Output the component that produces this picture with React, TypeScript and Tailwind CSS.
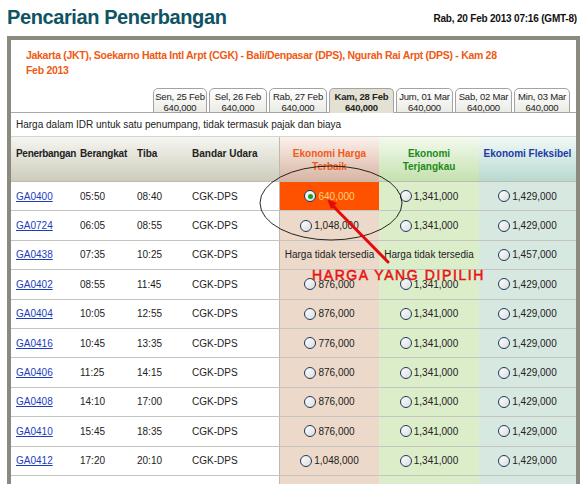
import React from 'react'

const tabs = [
  { day: 'Sen, 25 Feb', price: '640,000', w: 'w-[54px]' },
  { day: 'Sel, 26 Feb', price: '640,000', w: 'w-[58px]' },
  { day: 'Rab, 27 Feb', price: '640,000', w: 'w-[58px]' },
  { day: 'Kam, 28 Feb', price: '640,000', w: 'w-[65px]', active: true },
  { day: 'Jum, 01 Mar', price: '640,000', w: 'w-[57px]' },
  { day: 'Sab, 02 Mar', price: '640,000', w: 'w-[57px]' },
  { day: 'Min, 03 Mar', price: '640,000', w: 'w-[56px]' },
]

type Flight = {
  code: string
  dep: string
  arr: string
  best: string | null
  mid: string | null
  flex: string
  selected?: boolean
}

const flights: Flight[] = [
  { code: 'GA0400', dep: '05:50', arr: '08:40', best: '640,000', mid: '1,341,000', flex: '1,429,000', selected: true },
  { code: 'GA0724', dep: '06:05', arr: '08:55', best: '1,048,000', mid: '1,341,000', flex: '1,429,000' },
  { code: 'GA0438', dep: '07:35', arr: '10:25', best: null, mid: null, flex: '1,457,000' },
  { code: 'GA0402', dep: '08:55', arr: '11:45', best: '876,000', mid: '1,341,000', flex: '1,429,000' },
  { code: 'GA0404', dep: '10:05', arr: '12:55', best: '876,000', mid: '1,341,000', flex: '1,429,000' },
  { code: 'GA0416', dep: '10:45', arr: '13:35', best: '776,000', mid: '1,341,000', flex: '1,429,000' },
  { code: 'GA0406', dep: '11:25', arr: '14:15', best: '876,000', mid: '1,341,000', flex: '1,429,000' },
  { code: 'GA0408', dep: '14:10', arr: '17:00', best: '876,000', mid: '1,341,000', flex: '1,429,000' },
  { code: 'GA0410', dep: '15:45', arr: '18:35', best: '876,000', mid: '1,341,000', flex: '1,429,000' },
  { code: 'GA0412', dep: '17:20', arr: '20:10', best: '1,048,000', mid: '1,341,000', flex: '1,429,000' },
]

const cols = 'grid grid-cols-[65px_57px_55px_91px_100px_100px_97px]'

function Radio({ checked }: { checked?: boolean }) {
  return (
    <span className="inline-flex h-[12px] w-[12px] shrink-0 items-center justify-center rounded-full border border-[#1d3b5e] bg-gradient-to-br from-[#ffffff] to-[#dcdcdc]">
      {checked && <span className="h-[5px] w-[5px] rounded-full bg-[#1e9e2a]" />}
    </span>
  )
}

function Fare({ value, bg, selected }: { value: string | null; bg: string; selected?: boolean }) {
  if (value === null) {
    return (
      <div className={`flex items-center justify-center whitespace-nowrap text-[10px] text-[#222] ${bg}`}>
        Harga tidak tersedia
      </div>
    )
  }
  return (
    <div
      className={`flex items-center justify-center gap-[2px] text-[10px] ${
        selected ? 'bg-[#ff5200] text-[#ffd27c]' : `${bg} text-[#222]`
      }`}
    >
      <Radio checked={selected} />
      <span>{value}</span>
    </div>
  )
}

export default function App() {
  return (
    <div className="relative h-[484px] w-[583px] overflow-hidden bg-white text-[#222] [font-family:'Liberation_Sans',Arial,sans-serif]">
      <div className="flex h-[36px] items-start justify-between pl-[7px] pr-[6px] pt-[5px]">
        <h1 className="text-[20px] font-bold leading-[24px] tracking-[-0.4px] text-[#0e5462]">Pencarian Penerbangan</h1>
        <span className="pt-[6px] text-[10px] font-bold tracking-[-0.2px] text-[#111]">
          Rab, 20 Feb 2013 07:16 (GMT-8)
        </span>
      </div>

      <div className="ml-[7px] w-[573px] border-x-4 border-t-4 border-[#8c8a7e] bg-white">
        <p className="pl-[15px] pr-[76px] pt-[8px] text-[10.5px] font-bold leading-[15px] tracking-[-0.3px] text-[#ef5a12]">
          Jakarta (JKT), Soekarno Hatta Intl Arpt (CGK) - Bali/Denpasar (DPS), Ngurah Rai Arpt (DPS) - Kam 28 Feb 2013
        </p>

        <div className="mt-[10px] flex h-[25px] items-end gap-[2px] border-b border-[#a9a9a9] pl-[142px]">
          {tabs.map((t) => (
            <div
              key={t.day}
              className={`${t.w} -mb-px flex h-[25px] flex-col items-center rounded-t-[5px] border border-[#a3a3a3] pt-[2px] text-[9.5px] leading-[11px] tracking-[-0.2px] whitespace-nowrap ${
                t.active
                  ? 'border-b-[#e3e1d4] bg-[#e3e1d4] font-bold'
                  : 'bg-gradient-to-b from-[#ffffff] to-[#ebebe6]'
              }`}
            >
              <span>{t.day}</span>
              <span>{t.price}</span>
            </div>
          ))}
        </div>

        <div className="flex h-[24px] items-center border-b border-[#d6d6d0] px-[5px] text-[10px]">
          Harga dalam IDR untuk satu penumpang, tidak termasuk pajak dan biaya
        </div>

        <div className={`${cols} h-[45px] border-b border-[#bdbdb4] text-[10px] font-bold leading-[13px]`}>
          <div className="col-span-4 grid grid-cols-[65px_57px_55px_91px] bg-gradient-to-b from-[#f6f6f1] to-[#cdccbc] pt-[10px]">
            <span className="whitespace-nowrap pl-[5px] tracking-[-0.3px]">Penerbangan</span>
            <span className="pl-[4px] tracking-[-0.2px]">Berangkat</span>
            <span className="pl-[4px]">Tiba</span>
            <span className="pl-[4px]">Bandar Udara</span>
          </div>
          <div className="border-l border-[#c2b8ae] bg-gradient-to-b from-[#fbf1ec] to-[#d8b5a3] pt-[10px] text-center text-[#f05a1c]">
            Ekonomi Harga
            <br />
            Terbaik
          </div>
          <div className="bg-gradient-to-b from-[#f3faee] to-[#c5e1ae] pt-[10px] text-center text-[#1c8a1c]">
            Ekonomi
            <br />
            Terjangkau
          </div>
          <div className="bg-gradient-to-b from-[#f1f9f7] to-[#b9d9d0] pt-[10px] text-center text-[#1b3aa8]">
            Ekonomi Fleksibel
          </div>
        </div>

        {flights.map((f) => (
          <div key={f.code} className={`${cols} h-[29.4px] border-b border-[#c4c4c0] text-[10px]`}>
            <div className="flex items-center pl-[5px]">
              <a href="#" className="text-[#1a3dbf] underline">
                {f.code}
              </a>
            </div>
            <div className="flex items-center pl-[4px]">{f.dep}</div>
            <div className="flex items-center pl-[4px]">{f.arr}</div>
            <div className="flex items-center pl-[4px]">CGK-DPS</div>
            <div className="grid border-l border-[#c2b8ae]">
              <Fare value={f.best} bg="bg-[#ecd9c9]" selected={f.selected} />
            </div>
            <Fare value={f.mid} bg="bg-[#dcedca]" />
            <Fare value={f.flex} bg="bg-[#d7e8e0]" />
          </div>
        ))}

        <div className={`${cols} h-[29px]`}>
          <div className="col-span-4" />
          <div className="border-l border-[#c2b8ae] bg-[#ecd9c9]" />
          <div className="bg-[#dcedca]" />
          <div className="bg-[#d7e8e0]" />
        </div>
      </div>

      <svg className="pointer-events-none absolute left-0 top-0" width="583" height="484" viewBox="0 0 583 484">
        <ellipse cx="331" cy="203" rx="71" ry="37" fill="none" stroke="#111" strokeWidth="0.9" />
        <line x1="333" y1="206" x2="388" y2="262" stroke="#e30b0b" strokeWidth="3" strokeLinecap="round" />
        <path d="M327 199 L337 203 L331 209 Z" fill="#e30b0b" />
      </svg>
      <span className="absolute left-[312px] top-[268px] text-[14px] leading-[14px] tracking-[1.6px] text-[#e81212] [-webkit-text-stroke:0.5px_#e81212]">
        HARGA YANG DIPILIH
      </span>
    </div>
  )
}
